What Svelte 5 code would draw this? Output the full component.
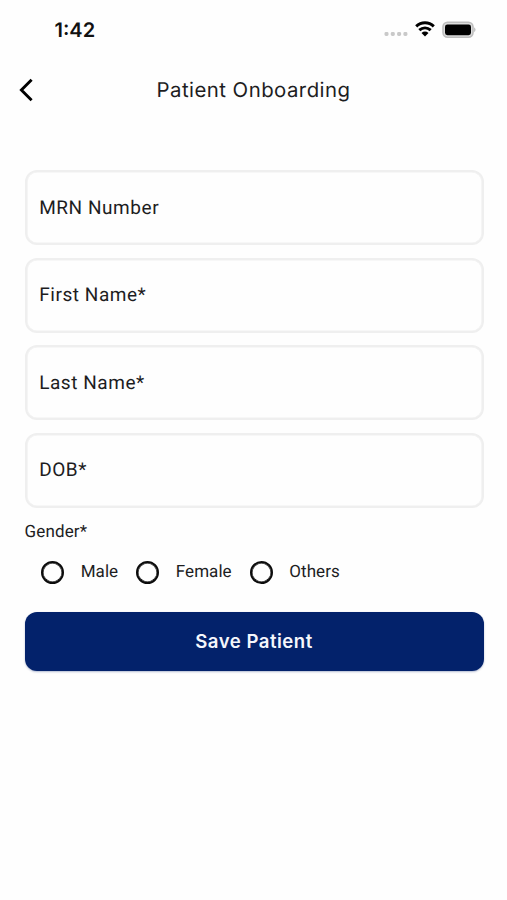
<script lang="ts">
	type Field = { id: string; label: string; value: string };

	let fields: Field[] = $state([
		{ id: 'mrn', label: 'MRN Number', value: '' },
		{ id: 'firstName', label: 'First Name*', value: '' },
		{ id: 'lastName', label: 'Last Name*', value: '' },
		{ id: 'dob', label: 'DOB*', value: '' }
	]);
	const genders = ['Male', 'Female', 'Others'];

	let gender = $state('');
</script>

<div class="screen">
	<div class="status-bar">
		<span class="time">1:42</span>
		<div class="indicators">
			<svg class="cellular" width="24" height="6" viewBox="0 0 24 6" fill="#c9c9c9">
				<rect x="0.5" y="1" width="4" height="4" rx="1.4" />
				<rect x="6.8" y="1" width="4" height="4" rx="1.4" />
				<rect x="13.1" y="1" width="4" height="4" rx="1.4" />
				<rect x="19.4" y="1" width="4" height="4" rx="1.4" />
			</svg>
			<svg class="wifi" width="20" height="16" viewBox="0 0 20 16">
				<g fill="none" stroke="#000" stroke-width="3">
					<path d="M1.2 5.4C6.2 .6 13.8 .6 18.8 5.4" />
					<path d="M4.3 9.2C7.7 6.2 12.3 6.2 15.7 9.2" />
				</g>
				<path d="M10 15.4 6.5 12Q10 9.2 13.5 12Z" />
			</svg>
			<svg class="battery" width="34" height="18" viewBox="0 0 34 18">
				<rect x="1" y="1.2" width="30" height="15" rx="4.6" fill="#ddd" stroke="#bdbdbd" stroke-width="1.6" />
				<rect x="3" y="3.4" width="26" height="10.8" rx="2.4" />
				<path d="M32.3 6.3Q34.6 8.8 32.3 11.3Z" fill="#a9a9a9" />
			</svg>
		</div>
	</div>

	<header>
		<button class="back" aria-label="Back">
			<svg width="16" height="24" viewBox="0 0 16 24" fill="none" stroke="#000" stroke-width="2.9">
				<path d="M13.6 1.8 3.4 12 13.6 22.2" />
			</svg>
		</button>
		<h1>Patient Onboarding</h1>
	</header>

	<form onsubmit={(e) => e.preventDefault()}>
		<div class="fields">
			{#each fields as field (field.id)}
				<label class="field">
					<span>{field.label}</span>
					<input name={field.id} bind:value={field.value} />
				</label>
			{/each}
		</div>

		<div class="gender-label">Gender*</div>
		<div class="genders">
			{#each genders as option}
				<label class="option">
					<input type="radio" name="gender" value={option} bind:group={gender} />
					<span>{option}</span>
				</label>
			{/each}
		</div>

		<button class="save" type="submit">Save Patient</button>
	</form>
</div>

<style>
	:global(body) {
		background: #fefefe;
	}
	.screen {
		height: 900px;
		box-sizing: border-box;
		overflow: hidden;
		background: #fefefe;
		color: #1d1d1f;
		font-family: Roboto, sans-serif;
		text-rendering: geometricPrecision;
	}
	.status-bar {
		display: flex;
		align-items: center;
		justify-content: space-between;
		height: 60px;
		padding: 0 31px 1px 54.5px;
		box-sizing: border-box;
	}
	.time {
		font-family: Inter, sans-serif;
		font-size: 20px;
		font-weight: 600;
		letter-spacing: 0;
		color: #111;
	}
	.indicators {
		display: flex;
		align-items: center;
	}
	.cellular {
		margin-top: 9px;
	}
	.wifi {
		margin: 0 7px 1px 7px;
	}
	header {
		display: grid;
		grid-template-columns: 60px 1fr 60px;
		align-items: center;
		height: 60px;
	}
	.back {
		display: flex;
		padding: 0 0 0 18px;
		border: none;
		background: none;
		cursor: pointer;
	}
	h1 {
		margin: 0;
		padding-bottom: 2px;
		font-family: Inter, sans-serif;
		font-size: 20.4px;
		font-weight: 400;
		letter-spacing: 0.45px;
		text-align: center;
		white-space: nowrap;
	}
	form {
		padding: 50px 23.5px 0 24.5px;
	}
	.fields {
		display: grid;
		gap: 12.5px;
	}
	.field {
		display: flex;
		align-items: center;
		height: 75px;
		padding: 0 12px 1px;
		box-sizing: border-box;
		border: 2px solid #efefef;
		box-shadow: inset 0 0 0 0.6px #efefef;
		border-radius: 12px;
		font-size: 19px;
		letter-spacing: 0.55px;
	}
	.field span {
		padding-left: 0.7px;
		white-space: nowrap;
	}
	.field input {
		flex: 1;
		min-width: 0;
		border: none;
		outline: none;
		background: none;
		font: inherit;
	}
	.gender-label {
		margin-top: 14px;
		font-size: 17px;
		line-height: 20px;
		letter-spacing: 0.15px;
	}
	.genders {
		display: flex;
		align-items: center;
		gap: 18px;
		height: 22px;
		margin: 19.5px 0 0 16.5px;
	}
	.option {
		display: flex;
		align-items: center;
		gap: 16.7px;
		font-size: 17px;
		letter-spacing: 0.05px;
	}
	.option input {
		appearance: none;
		width: 23px;
		height: 23px;
		margin: 0;
		box-sizing: border-box;
		border: 2px solid #0b0b0b;
		box-shadow: inset 0 0 0 0.5px #0b0b0b;
		border-radius: 50%;
	}
	.option input:checked {
		background: radial-gradient(#03226b 45%, transparent 50%);
	}
	.save {
		display: block;
		width: 100%;
		height: 59px;
		margin-top: 28.5px;
		border: none;
		border-radius: 12px;
		background: #03226b;
		box-shadow: 0 1px 2px rgba(3, 34, 107, 0.3);
		color: #f5f7fc;
		font-family: Inter, sans-serif;
		font-size: 18.6px;
		font-weight: 600;
		letter-spacing: 0.5px;
		cursor: pointer;
	}
</style>
